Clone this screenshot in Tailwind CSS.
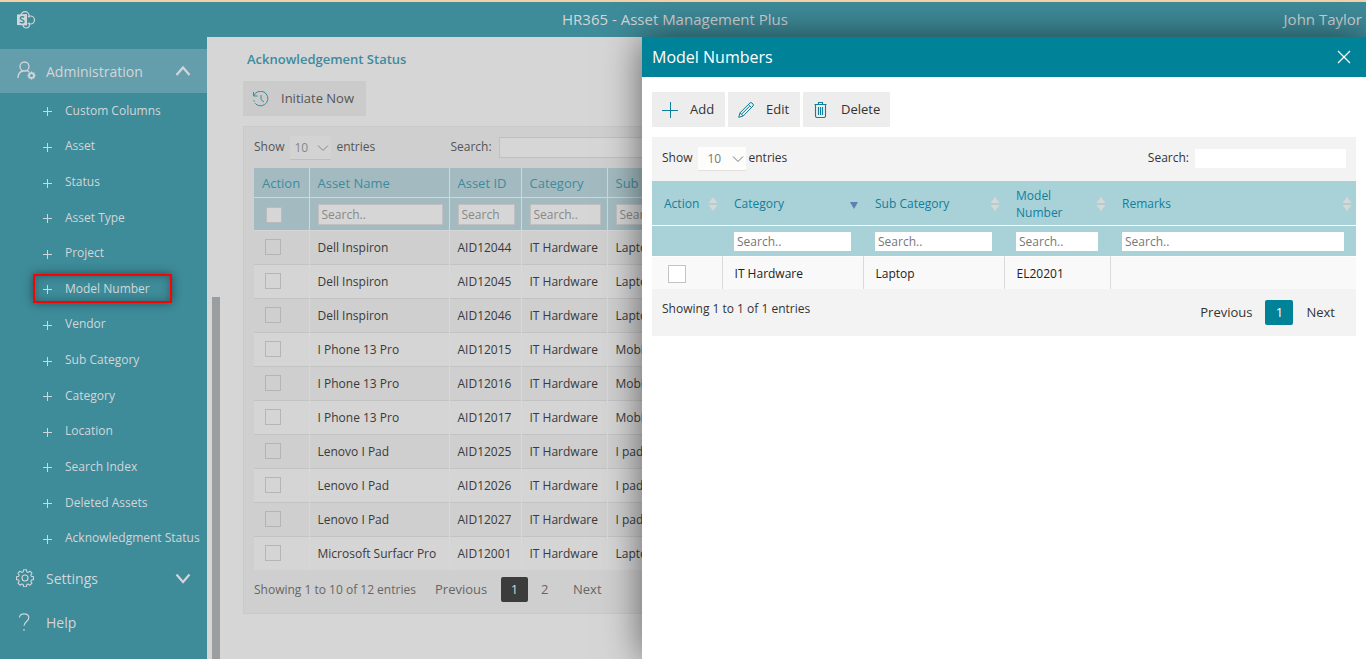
<!DOCTYPE html>
<html lang="en">
<head>
<meta charset="utf-8">
<title>HR365 - Asset Management Plus</title>
<script src="https://cdn.jsdelivr.net/npm/@tailwindcss/browser@4"></script>
</head>
<body class="relative flex h-screen flex-col overflow-hidden border-t-2 border-[#f5d0a4] bg-[#d6d6d6] font-['Open_Sans','Noto_Sans',sans-serif] text-[13px] text-[#333]">
<svg class="hidden">
  <symbol id="chev" viewBox="0 0 12 12"><path d="M1 3.5 6 8.5 11 3.5" fill="none" stroke="currentColor"/></symbol>
  <symbol id="plus" viewBox="0 0 9 9"><path d="M4.500 0V9M0 4.500H9" fill="none" stroke="currentColor"/></symbol>
  <symbol id="sort" viewBox="0 0 10 14"><path d="M5 0 9.5 6H.5ZM5 14 .5 8h9Z" fill="currentColor"/></symbol>
</svg>

<header class="flex h-[35px] shrink-0 items-center bg-[#3e8b99] px-4 pr-1 text-[#d3d6d8]">
  <a href="#" aria-label="SharePoint" class="w-[68px]">
    <svg class="h-[18px] w-5" viewBox="0 0 20 18" fill="none" stroke="currentColor" stroke-width="1.200">
      <circle cx="9" cy="4.700" r="4.100"/>
      <circle cx="14.500" cy="9" r="4"/>
      <circle cx="10.200" cy="13.800" r="3.200"/>
      <path d="M11 5.500 12.500 9 11.500 12" stroke="#3e8b99" stroke-width="2"/>
      <path d="M1 3.500 11 3V14.500L1 14Z" fill="currentColor" stroke="none"/>
      <path d="M8.200 6.200C7 5.500 4.300 5.400 4.300 7.200c0 1.900 3.700 1.500 3.700 3.300 0 1.700-2.700 1.500-4.200.7" stroke="#3e8b99" stroke-width="1.400"/>
    </svg>
  </a>
  <h1 class="flex-1 text-center text-[15px]">HR365 - Asset Management Plus</h1>
  <span class="w-24 text-right text-[15px] whitespace-nowrap">John Taylor</span>
</header>

<div class="flex min-h-0 flex-1">
  <nav class="w-[207px] shrink-0 bg-[#3e8b99] pt-3 text-[#d3d6d8]">
    <button class="flex h-11 w-full items-center bg-[#649eac] pl-4 text-[14px]">
      <svg class="mr-2 size-[22px]" viewBox="0 0 22 22" fill="none" stroke="currentColor" stroke-width="1.300">
        <circle cx="8.500" cy="6.500" r="4.500"/><path d="M2 18c0-3.800 2.200-6.500 5-7M11 10.600c1 .3 1.500.8 2 1.400"/>
        <circle cx="15.500" cy="15.500" r="2.400" stroke-width="1.700"/><path d="M15.500 11.500v1.500M15.500 18v1.500M11.500 15.500h1.500M18 15.500h1.500M12.700 12.700l1 1M17.300 17.300l1 1M18.300 12.700l-1 1M13.700 17.300l-1 1" stroke-width="1.500"/>
      </svg>
      Administration
      <svg class="mr-4 ml-auto size-4" viewBox="0 0 16 16" fill="none" stroke="currentColor" stroke-width="2.200"><path d="M1.500 12 8 4.500 14.500 12"/></svg>
    </button>
    <ul id="menu" class="flex h-[463px] flex-col pl-[33px] text-[12px] whitespace-nowrap"></ul>
    <button class="flex h-11 w-full items-center pl-4 text-[14px]">
      <svg class="mr-3 size-[18px]" viewBox="0 0 18 18" fill="none" stroke="currentColor" stroke-width="1.100">
        <circle cx="9" cy="9" r="3"/>
        <path d="M7.600.7h2.800l.4 2.100 1.400.6 1.800-1.200 2 2-1.200 1.800.6 1.400 2.100.4v2.800l-2.100.4-.6 1.400 1.200 1.800-2 2-1.800-1.200-1.400.6-.4 2.100H7.600l-.4-2.100-1.400-.6L4 16.200l-2-2 1.200-1.800L2.600 11 .5 10.600V7.800l2.100-.4L3.200 6 2 4.200l2-2 1.800 1.200 1.400-.6Z" stroke-linejoin="round"/>
      </svg>
      Settings
      <svg class="mr-4 ml-auto size-4" viewBox="0 0 16 16" fill="none" stroke="currentColor" stroke-width="2.200"><path d="M1.500 4.500 8 12 14.500 4.500"/></svg>
    </button>
    <button class="flex h-11 w-full items-center pl-4 text-[14px]">
      <svg class="mr-3 size-[18px]" viewBox="0 0 18 18" fill="none" stroke="currentColor" stroke-width="1.200"><path d="M3.500 4.500C3.500 2 5.500.8 8 .8s4.800 1.400 4.800 4c0 3.500-4.800 4-4.800 8M8 16v1.800"/></svg>
      Help
    </button>
  </nav>

  <div class="w-[13px] shrink-0 pt-[260px] pl-[5px]"><div class="h-full bg-[#9a9ea1]"></div></div>

  <main class="min-w-0 flex-1 overflow-hidden pl-[23px] text-[#555]">
    <h2 class="mt-3 ml-1 h-5 text-[13px] leading-5 font-semibold text-[#3e8b9d]">Acknowledgement Status</h2>
    <button class="mt-3 flex h-[35px] w-[123px] items-center gap-3 bg-[#cbcbcb] pl-[10px] text-[13px]">
      <svg class="size-4 text-[#3e8b9d]" viewBox="0 0 16 16" fill="none" stroke="currentColor"><path d="M.5 1v4h4M.8 4.800A7.300 7.300 0 1 1 3 13.200M8 4v4.500l3 2.500" /><path d="M3 13.200A7.300 7.300 0 0 1 .7 8.500" stroke-dasharray="1.500 1.500"/></svg>
      Initiate Now
    </button>
    <section class="mt-[10px] h-[488px] w-[1100px] border border-[#c9c9c9] bg-[#cfcfcf] pt-[9px] pl-[10px]">
      <div class="flex h-8 items-start">
        <label for="len1" class="mr-1.5 leading-[22px] text-[12px]">Show</label>
        <span class="relative">
          <select id="len1" class="h-6 w-[41px] appearance-none border-b border-[#bebebe] bg-[#d3d3d3] pl-1 text-[12px] text-[#888]"><option>10</option></select>
          <svg class="pointer-events-none absolute top-1.5 right-0.5 size-3 text-[#888]"><use href="#chev"/></svg>
        </span>
        <span class="ml-[5px] w-[114px] leading-[22px] text-[12px]">entries</span>
        <label for="s1" class="mr-[7px] leading-[22px] text-[12px]">Search:</label>
        <input id="s1" class="mt-px h-[21px] w-[160px] border border-[#c0c0c0] bg-[#d6d6d6] px-1">
      </div>
      <table class="w-[1070px] table-fixed border-collapse text-left text-[12px]">
        <colgroup><col class="w-[55px]"><col class="w-[140px]"><col class="w-[72px]"><col class="w-[86px]"><col></colgroup>
        <thead class="bg-[#a3bbc0] text-[13px] text-[#3e8b9d] [&_th]:border-r [&_th]:border-b [&_th]:border-[#d6d6d6] [&_th]:pt-0.5 [&_th]:pl-2 [&_th]:font-normal">
          <tr class="h-[29px]"><th>Action</th><th>Asset Name</th><th>Asset ID</th><th>Category</th><th>Sub Category</th></tr>
          <tr class="h-[33px]">
            <th><input type="checkbox" aria-label="Select all" class="ml-1 block size-4 appearance-none border border-[#bbb] bg-[#d6d6d6]"></th>
            <th><input aria-label="Search asset name" placeholder="Search.." class="block h-[21px] w-[125px] border border-[#c0c0c0] bg-[#d6d6d6] px-[3px] text-[12px] placeholder:text-[#888]"></th>
            <th><input aria-label="Search asset ID" placeholder="Search" class="block h-[21px] w-[57px] border border-[#c0c0c0] bg-[#d6d6d6] px-[3px] text-[12px] placeholder:text-[#888]"></th>
            <th><input aria-label="Search category" placeholder="Search.." class="block h-[21px] w-[71px] border border-[#c0c0c0] bg-[#d6d6d6] px-[3px] text-[12px] placeholder:text-[#888]"></th>
            <th><input aria-label="Search sub category" placeholder="Search.." class="block h-[21px] w-[100px] border border-[#c0c0c0] bg-[#d6d6d6] px-[3px] text-[12px] placeholder:text-[#888]"></th>
          </tr>
        </thead>
        <tbody id="rows" class="text-[#3a3a3a]"></tbody>
      </table>
      <div class="flex items-center pt-[7px] text-[12px] text-[#666]">
        <span class="w-[181px] whitespace-nowrap">Showing 1 to 10 of 12 entries</span>
        <a href="#" class="w-[66px] text-[13px]">Previous</a>
        <a href="#" class="flex h-[25px] w-[27px] items-center justify-center rounded-[2px] bg-[#3c3c3c] text-[13px] text-[#d6d6d6]">1</a>
        <a href="#" class="ml-[13px] w-8 text-[13px]">2</a>
        <a href="#" class="text-[13px]">Next</a>
      </div>
    </section>
  </main>
</div>

<aside role="dialog" aria-labelledby="dlg" class="absolute top-[35px] right-0 bottom-0 w-[53%] bg-white shadow-[0_0_36px_rgba(0,0,0,0.55)]">
  <div class="flex h-10 items-center justify-between bg-[#008299] pr-[15px] pl-[10px] text-white">
    <h2 id="dlg" class="text-[16px]">Model Numbers</h2>
    <button aria-label="Close"><svg class="size-[14px]" viewBox="0 0 14 14" fill="none" stroke="currentColor" stroke-width="1.300"><path d="M1 1 13 13M13 1 1 13"/></svg></button>
  </div>
  <div class="px-[10px] pt-[15px]">
    <div class="flex gap-[3px] text-[13px]">
      <button class="flex h-[35px] w-[73px] items-center gap-3 bg-[#ededed] pl-[10px]"><svg class="size-4 text-[#0f7f9b]" viewBox="0 0 16 16" fill="none" stroke="currentColor"><path d="M8.500 0V16M0 8.500H16"/></svg>Add</button>
      <button class="flex h-[35px] w-[72px] items-center gap-3 bg-[#ededed] pl-[10px]"><svg class="size-4 text-[#0f7f9b]" viewBox="0 0 16 16" fill="none" stroke="currentColor"><path d="M.7 15.300 2 10.800 12 .9q1-.7 2 .1l1 1q.8 1 0 2L5.200 14ZM10.400 2.500l3.100 3.100M2 10.800l3.200 3.200M3.500 12.300l8-8"/></svg>Edit</button>
      <button class="flex h-[35px] w-[87px] items-center gap-3 bg-[#ededed] pl-[10px]"><svg class="size-4 text-[#0f7f9b]" viewBox="0 0 16 16" fill="none" stroke="currentColor" stroke-width="1.100"><path d="M1.500 2.500h12M5.500 2V.5h4V2M2.500 3v11q0 1.500 1.500 1.500h7q1.500 0 1.500-1.500V3M5.500 5v8M7.500 5v8M9.500 5v8"/></svg>Delete</button>
    </div>
    <section class="mt-[10px] bg-[#f3f3f3] text-[12px]">
      <div class="flex h-11 items-start px-[10px] pt-[10px]">
        <label for="len2" class="mr-[5px] leading-[21px]">Show</label>
        <span class="relative">
          <select id="len2" class="h-6 w-12 appearance-none border-b border-[#e3e0dc] bg-[#fdfdfc] pl-[10px] text-[12px] text-[#777]"><option>10</option></select>
          <svg class="pointer-events-none absolute top-1.5 right-0.5 size-3 text-[#777]"><use href="#chev"/></svg>
        </span>
        <span class="mr-auto ml-[3px] leading-[21px]">entries</span>
        <label for="s2" class="mr-1.5 leading-[21px]">Search:</label>
        <input id="s2" class="mt-[2px] h-[19px] w-[151px] bg-white px-1">
      </div>
      <table class="w-full table-fixed border-collapse text-left">
        <colgroup><col class="w-[70px]"><col class="w-[141px]"><col class="w-[141px]"><col class="w-[106px]"><col></colgroup>
        <thead class="bg-[#a9d1d8] text-[#107f9b] [&_th]:pt-0.5 [&_th]:pl-3 [&_th]:font-normal">
          <tr class="h-11 border-b border-white">
            <th><span class="flex items-center justify-between pr-1">Action<svg class="h-[14px] w-[10px] text-[#d9d6d3]"><use href="#sort"/></svg></span></th>
            <th><span class="flex items-center justify-between pr-[5px]">Category<svg class="mt-1 h-[7px] w-2 text-[#5f7fb0]" viewBox="0 0 8 7"><path d="M0 0H8L4 7Z" fill="currentColor"/></svg></span></th>
            <th><span class="flex items-center justify-between pr-1">Sub Category<svg class="h-[14px] w-[10px] text-[#d9d6d3]"><use href="#sort"/></svg></span></th>
            <th><span class="flex items-center justify-between pr-1 leading-[17px]">Model<br>Number<svg class="h-[14px] w-[10px] text-[#d9d6d3]"><use href="#sort"/></svg></span></th>
            <th><span class="flex items-center justify-between pr-1">Remarks<svg class="h-[14px] w-[10px] text-[#d9d6d3]"><use href="#sort"/></svg></span></th>
          </tr>
          <tr class="h-[31px] border-b border-white [&_input]:block [&_input]:h-[19px] [&_input]:w-full [&_input]:bg-white [&_input]:px-[3px] [&_input]:placeholder:text-[#777] [&_th]:pr-3">
            <th></th>
            <th><input aria-label="Search category" placeholder="Search.."></th>
            <th><input aria-label="Search sub category" placeholder="Search.."></th>
            <th><input aria-label="Search model number" placeholder="Search.."></th>
            <th><input aria-label="Search remarks" placeholder="Search.."></th>
          </tr>
        </thead>
        <tbody class="bg-[#f9f9f9] text-[#222] [&_td]:border-l [&_td]:border-[#ddd9d6] [&_td]:pt-0.5 [&_td]:pl-3 [&_td:first-child]:border-l-0">
          <tr class="h-[33px]"><td><input type="checkbox" aria-label="Select row" class="ml-1 block size-[18px] appearance-none border border-[#c4c4c4] bg-white"></td><td>IT Hardware</td><td>Laptop</td><td>EL20201</td><td></td></tr>
        </tbody>
      </table>
      <div class="flex h-[47px] items-start justify-between pt-[11px] pr-[21px] pl-[10px]">
        <span>Showing 1 to 1 of 1 entries</span>
        <div class="flex items-center gap-[13px] text-[13px]">
          <a href="#">Previous</a>
          <a href="#" class="flex h-[25px] w-7 items-center justify-center rounded-[2px] bg-[#008299] text-white">1</a>
          <a href="#">Next</a>
        </div>
      </div>
    </section>
  </div>
</aside>

<script>
  const items = ["Custom Columns","Asset","Status","Asset Type","Project","Model Number","Vendor","Sub Category","Category","Location","Search Index","Deleted Assets","Acknowledgment Status"];
  document.getElementById("menu").innerHTML = items.map(t =>
    `<li class="flex flex-1 items-center"><a href="#" class="flex h-[29px] items-center gap-[13px] border-2 pl-2 ${t === "Model Number" ? "w-[139px] border-[#f00] shadow-[0_0_9px_rgba(0,0,0,0.45),inset_0_0_9px_rgba(0,0,0,0.3)]" : "border-transparent"}"><svg class="mt-0.5 size-[9px]"><use href="#plus"/></svg>${t}</a></li>`).join("");
  const data = [["Dell Inspiron","AID12044","Laptop"],["Dell Inspiron","AID12045","Laptop"],["Dell Inspiron","AID12046","Laptop"],["I Phone 13 Pro","AID12015","Mobile"],["I Phone 13 Pro","AID12016","Mobile"],["I Phone 13 Pro","AID12017","Mobile"],["Lenovo I Pad","AID12025","I pad"],["Lenovo I Pad","AID12026","I pad"],["Lenovo I Pad","AID12027","I pad"],["Microsoft Surfacr Pro","AID12001","Laptop"]];
  document.getElementById("rows").innerHTML = data.map(([n, id, s]) =>
    `<tr class="h-[34px] border-b border-[#c3c3c3] odd:bg-[#cfcfcf] even:bg-[#d5d5d5] last:border-0 [&_td]:border-r [&_td]:border-r-[#d8d8d8] [&_td]:pt-0.5 [&_td]:pl-2"><td><input type="checkbox" aria-label="Select ${id}" class="mb-0.5 ml-[3px] block size-4 appearance-none border border-[#b5b5b5]"></td><td class="whitespace-nowrap">${n}</td><td>${id}</td><td class="whitespace-nowrap">IT Hardware</td><td>${s}</td></tr>`).join("");
</script>
</body>
</html>
